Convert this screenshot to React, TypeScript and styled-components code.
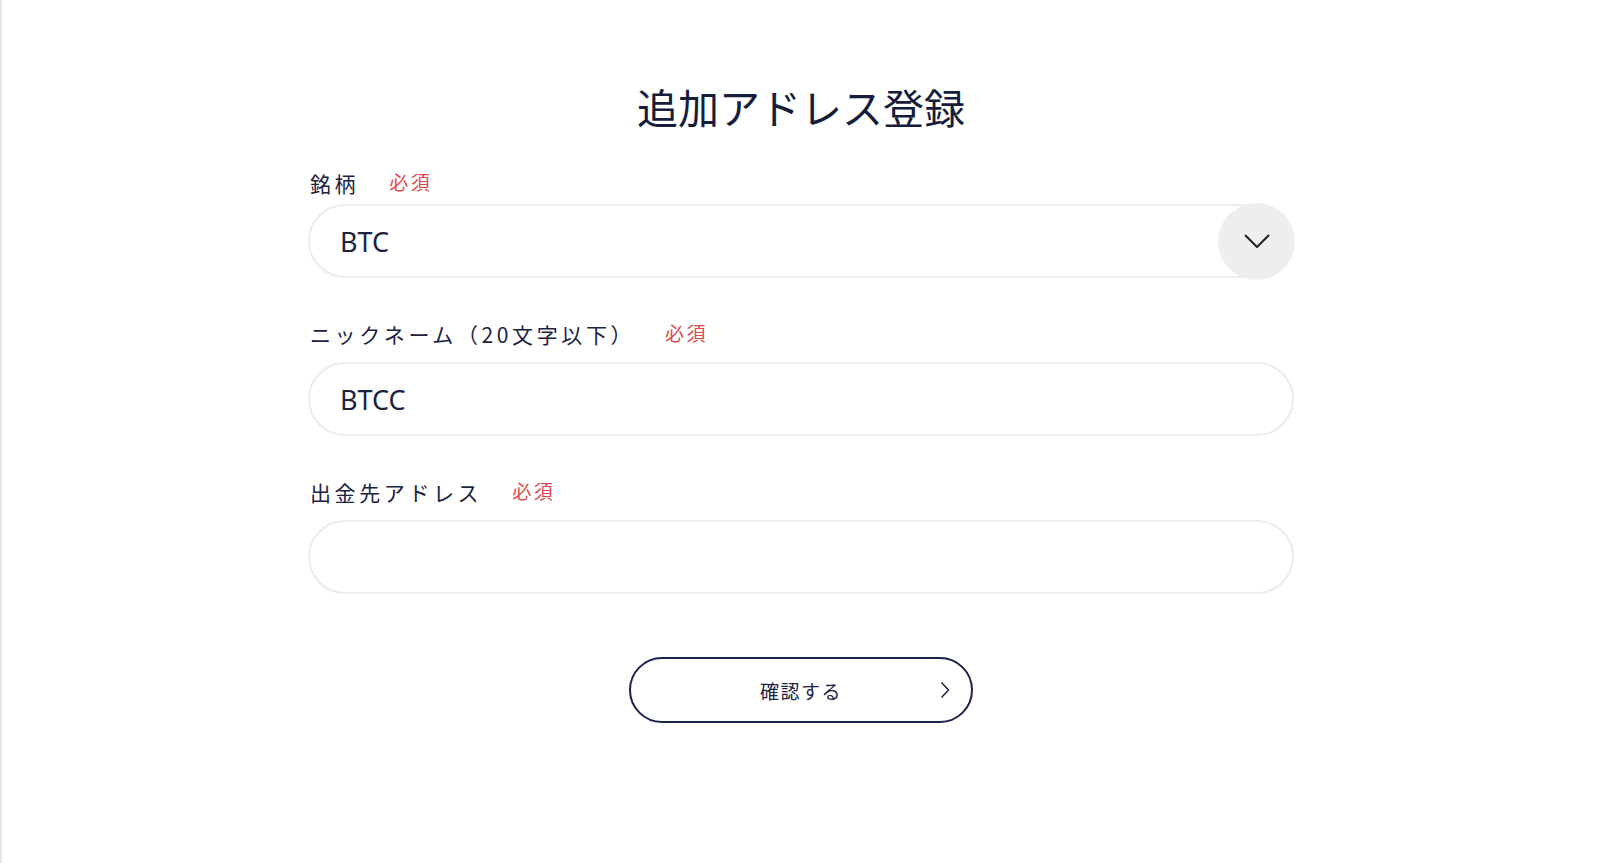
import React from "react";
import styled, { createGlobalStyle } from "styled-components";

const GlobalStyle = createGlobalStyle`
  html, body {
    margin: 0;
    padding: 0;
    background: #ffffff;
  }
  body {
    font-family: "Noto Sans", "Noto Sans CJK JP", sans-serif;
    color: #1b2341;
  }
  * {
    box-sizing: border-box;
  }
`;

const Page = styled.div`
  min-height: 863px;
  border-left: 2px solid #e8e8e8;
  background: #ffffff;
  padding-top: 77px;
`;

const Title = styled.h1`
  margin: 0;
  text-align: center;
  font-family: "Noto Sans CJK JP", sans-serif;
  font-size: 41px;
  font-weight: 400;
  line-height: 58px;
  color: #151d3b;
`;

const Form = styled.form`
  width: 986px;
  margin: 33px auto 0;
  display: flex;
  flex-direction: column;
  gap: 41px;
`;

const FieldGroup = styled.div`
  display: flex;
  flex-direction: column;
`;

const LabelRow = styled.div<{ $tight?: boolean }>`
  height: 30px;
  display: flex;
  align-items: center;
  padding-left: 2px;
  margin-bottom: ${(p) => (p.$tight ? "6px" : "13px")};
`;

const Label = styled.label`
  font-family: "Noto Sans CJK JP", sans-serif;
  font-size: 21px;
  letter-spacing: 3.6px;
  line-height: 30px;
  color: #1b2341;
`;

const Required = styled.span`
  margin-left: 30px;
  margin-top: -3px;
  font-family: "Noto Sans CJK JP", sans-serif;
  font-size: 19px;
  letter-spacing: 2.5px;
  color: #dc4a4f;
`;

const Box = styled.div`
  height: 74px;
  border: 2px solid #ececec;
  border-radius: 37px;
  display: flex;
  align-items: center;
  padding-left: 30px;
  background: #ffffff;
`;

const Value = styled.span`
  flex: 1;
  font-size: 27px;
  color: #1b2341;
`;

const TextInput = styled.input`
  height: 74px;
  width: 100%;
  border: 2px solid #ececec;
  border-radius: 37px;
  padding: 0 30px;
  font-family: "Noto Sans", "Noto Sans CJK JP", sans-serif;
  font-size: 27px;
  color: #1b2341;
  background: #ffffff;
  outline: none;
`;

const DropButton = styled.button`
  flex: none;
  width: 77px;
  height: 77px;
  margin-right: -3px;
  border: none;
  border-radius: 50%;
  background: #eeeeee;
  display: flex;
  align-items: center;
  justify-content: center;
  padding: 0;
  cursor: pointer;
`;

const Actions = styled.div`
  display: flex;
  justify-content: center;
  margin-top: 22px;
`;

const ConfirmButton = styled.button`
  position: relative;
  width: 344px;
  height: 66px;
  border: 2px solid #1b2448;
  border-radius: 33px;
  background: #ffffff;
  display: flex;
  align-items: center;
  justify-content: center;
  font-family: "Noto Sans CJK JP", sans-serif;
  font-size: 19px;
  letter-spacing: 1.5px;
  color: #1b2341;
  cursor: pointer;
  svg {
    position: absolute;
    right: 21px;
    top: 50%;
    transform: translateY(-50%);
  }
`;

const ChevronDown = () => (
  <svg width="26" height="14" viewBox="0 0 26 14" fill="none">
    <path d="M1 1 L13 13 L25 1" stroke="#222222" strokeWidth="2" />
  </svg>
);

const ChevronRight = () => (
  <svg width="10" height="17" viewBox="0 0 10 17" fill="none">
    <path d="M1.5 1 L8.5 8.5 L1.5 16" stroke="#1b2341" strokeWidth="1.5" />
  </svg>
);

const App = () => {
  return (
    <>
      <GlobalStyle />
      <Page>
        <Title>追加アドレス登録</Title>
        <Form onSubmit={(e) => e.preventDefault()}>
          <FieldGroup>
            <LabelRow $tight>
              <Label>銘柄</Label>
              <Required>必須</Required>
            </LabelRow>
            <Box>
              <Value>BTC</Value>
              <DropButton type="button" aria-label="銘柄を選択">
                <ChevronDown />
              </DropButton>
            </Box>
          </FieldGroup>
          <FieldGroup>
            <LabelRow>
              <Label>ニックネーム（20文字以下）</Label>
              <Required>必須</Required>
            </LabelRow>
            <TextInput defaultValue="BTCC" />
          </FieldGroup>
          <FieldGroup>
            <LabelRow>
              <Label>出金先アドレス</Label>
              <Required>必須</Required>
            </LabelRow>
            <TextInput defaultValue="" />
          </FieldGroup>
          <Actions>
            <ConfirmButton type="submit">
              確認する
              <ChevronRight />
            </ConfirmButton>
          </Actions>
        </Form>
      </Page>
    </>
  );
};

export default App;
